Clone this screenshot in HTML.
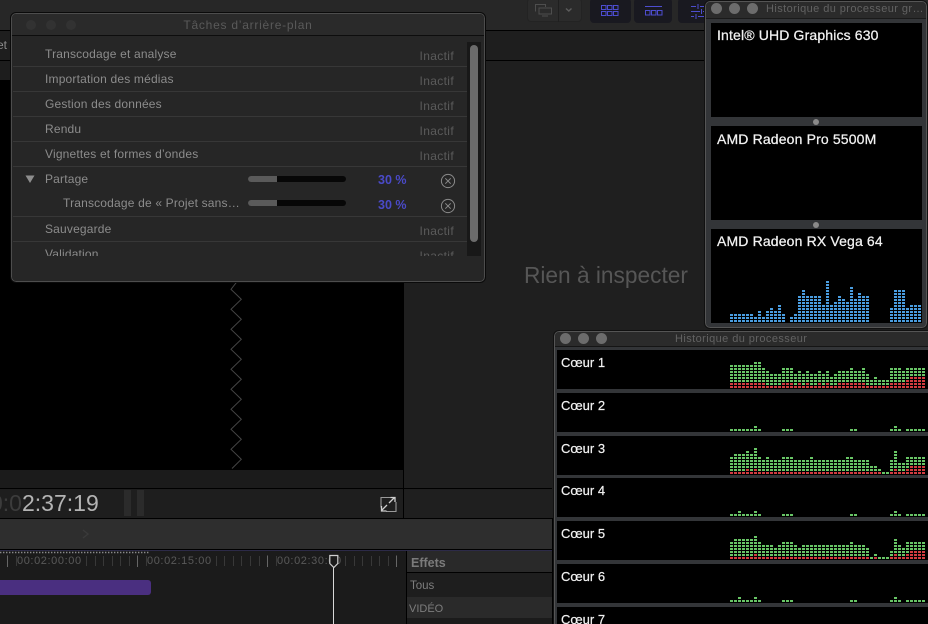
<!DOCTYPE html>
<html lang="fr">
<head>
<meta charset="utf-8">
<title>Tâches d'arrière-plan</title>
<style>
html,body{margin:0;padding:0;background:#1d1d1d}
#p{position:relative;width:928px;height:624px;overflow:hidden;font-family:"Liberation Sans",sans-serif;background:#1e1e1e}
#p div,#p span{position:absolute;white-space:nowrap}
.l{left:0;right:0;height:1px;background:#000}
.t{font-size:12px;line-height:14px;color:#8c8c8c;letter-spacing:.18px;left:33px}
.i{font-size:12px;line-height:14px;color:#5b5b5b;right:24px;letter-spacing:.35px}
.s{left:1px;width:455px;height:1px;background:#373737}
.pc{font-size:12.5px;line-height:14px;font-weight:bold;color:#4a4ac8;left:366px}
.tr{left:236px;width:98px;height:6px;border-radius:3px;background:#070707}
.fi{left:0;top:0;width:29px;height:6px;border-radius:3px 0 0 3px;background:#5a5a5a}
.g{left:6px;width:211px;height:94px;background:#000}
.gt{left:6px;top:5px;font-size:14px;line-height:16px;color:#f2f2f2;letter-spacing:.15px;-webkit-text-stroke:.25px #f2f2f2}
.c{left:3px;right:0;height:39px;background:#000}
.ct{left:4px;top:5px;font-size:13px;line-height:15px;color:#f2f2f2;-webkit-text-stroke:.2px #f2f2f2}
.rt{font-size:11px;line-height:12px;color:#595959;top:555px;letter-spacing:.6px}
</style>
</head>
<body>
<div id="p">
  <!-- top bars -->
  <div style="left:0;top:0;width:928px;height:30px;background:#272727"></div>
  <div class="l" style="top:30px"></div>
  <div style="left:0;top:31px;width:928px;height:29px;background:#1e1e1e"></div>
  <div class="l" style="top:60px"></div>
  <div style="top:37px;font-size:12px;line-height:16px;color:#8c8c8c;left:-3px">et</div>

  <!-- toolbar buttons -->
  <div style="left:527px;top:-2px;width:55px;height:24px;border-radius:4px;background:#2b2b2b;border:1px solid #232323;box-sizing:border-box"></div>
  <div style="left:558px;top:0;width:1px;height:22px;background:#1f1f1f"></div>
  <div style="left:590px;top:-2px;width:41px;height:25px;border-radius:4px;background:#191920"></div>
  <div style="left:634px;top:-2px;width:38px;height:25px;border-radius:4px;background:#191920"></div>
  <div style="left:678px;top:-2px;width:40px;height:25px;border-radius:4px;background:#191920"></div>

  <!-- viewer -->
  <div style="left:0;top:61px;width:403px;height:19px;background:#1d1d1d"></div>
  <div style="left:0;top:80px;width:403px;height:390px;background:#000"></div>
  <div style="left:0;top:470px;width:403px;height:18px;background:#1b1b1b"></div>
  <div class="l" style="top:488px;width:552px;right:auto"></div>
  <div style="left:403px;top:60px;width:1px;height:458px;background:#000"></div>
  <div style="left:404px;top:61px;width:524px;height:427px;background:#1f1f1f"></div>
  <div style="left:404px;top:489px;width:148px;height:29px;background:#1f1f1f"></div>
  <div style="left:0;top:489px;width:403px;height:29px;background:#1e1e1e"></div>
  <div class="l" style="top:518px;width:552px;right:auto"></div>
  <div style="left:524px;top:262px;font-size:22.7px;line-height:26px;color:#565656">Rien à inspecter</div>

  <!-- timecode -->
  <div style="left:-10px;top:489px;font-size:23px;line-height:28px;color:#3c3c3c">0:0</div>
  <div style="left:22px;top:489px;font-size:23px;line-height:28px;color:#b4b4b4">2:37:19</div>
  <div style="left:124px;top:490px;width:7px;height:26px;background:#2b2b2b"></div>
  <div style="left:137px;top:490px;width:7px;height:26px;background:#2b2b2b"></div>

  <!-- mid band -->
  <div style="left:0;top:519px;width:552px;height:30px;background:#2e2e2e"></div>
  <div style="left:0;top:549px;width:552px;height:1px;background:#000"></div>
  <div style="left:0;top:550px;width:552px;height:1px;background:#2c2a48"></div>
  <div style="left:0;top:551px;width:552px;height:73px;background:#1b1b1b"></div>
  <div style="left:552px;top:518px;width:2px;height:106px;background:#000"></div>

  <!-- ruler -->
  <div class="rt" style="left:17px">00:02:00:00</div>
  <div class="rt" style="left:147px">00:02:15:00</div>
  <div class="rt" style="left:277px">00:02:30:00</div>
  <!-- clip -->
  <div style="left:-6px;top:580px;width:157px;height:15px;border-radius:3px;background:#4a2f80"></div>

  <!-- effects -->
  <div style="left:406px;top:551px;width:1px;height:73px;background:#000"></div>
  <div style="left:407px;top:551px;width:145px;height:21px;background:#292929"></div>
  <div style="left:407px;top:572px;width:145px;height:1px;background:#000"></div>
  <div style="left:407px;top:573px;width:145px;height:24px;background:#1e1e1e"></div>
  <div style="left:407px;top:597px;width:145px;height:21px;background:#2a2a2a"></div>
  <div style="left:407px;top:618px;width:145px;height:6px;background:#1b1b1b"></div>
  <div style="left:411px;top:556px;font-size:12.5px;line-height:15px;font-weight:bold;color:#7b7b7b">Effets</div>
  <div style="left:410px;top:579px;font-size:11.5px;line-height:14px;color:#7d7d7d">Tous</div>
  <div style="left:409px;top:602px;font-size:11px;line-height:14px;color:#7d7d7d">VIDÉO</div>

  <!-- base svg -->
  <svg style="position:absolute;left:0;top:0" width="928" height="624" viewBox="0 0 928 624" fill="none">
    <path d="M237.5 281L231 289.3 241.3 299.3 231 309.3 241.3 319.3 231 329.3 241.3 339.3 231 349.3 241.3 359.3 231 369.3 241.3 379.3 231 389.3 241.3 399.3 231 409.3 241.3 419.3 231 429.3 241.3 439.3 231 449.3 241.3 459.3 232 468.5" stroke="#464646" stroke-width="1"/>
    <!-- monitor icon -->
    <g stroke="#4e4e4e" stroke-width="1"><path d="M535.5 11.5V4.5H545.5V7M539 8H551.5V14H539ZM542 16H548"/><path d="M566 8.5L568.8 11 571.5 8.5" stroke="#5c5c5c" stroke-width="1.4"/></g>
    <!-- grid icons -->
    <g stroke="#4d4dcf" stroke-width="1">
      <path d="M601.5 5.5h4.5v4h-4.5zM607.5 5.5h4.5v4h-4.5zM613.5 5.5h4.5v4h-4.5zM601.5 11.5h4.5v4h-4.5zM607.5 11.5h4.5v4h-4.5zM613.5 11.5h4.5v4h-4.5z"/>
      <path d="M645 6.5h17M645.5 10.5h4.5v4.5h-4.5zM651.5 10.5h4.5v4.5h-4.5zM657.5 10.5h4.5v4.5h-4.5z"/>
      <path d="M691 6.5h5M700 6.5h5M691 11.5h9M703 11.5h2M691 16.5h3M698 16.5h7M698 4v5M701.5 9v5M696 14v5"/>
    </g>
    <!-- fullscreen -->
    <g stroke="#cfcfcf" stroke-width="1.1">
      <path d="M381 507.5V497.5H391M396 502V511.5H386" stroke="#9a9a9a"/>
      <path d="M389 503L394.5 497.5M390.5 497.5H395V502M387 505L381.5 510.5M381.5 506V511H386.5" stroke-width="1.3"/>
    </g>
    <!-- chevron in mid band -->
    <path d="M83 530L88 534 83 538" stroke="#3a3a3a" stroke-width="1.4"/>
    <!-- ruler -->
    <path d="M0 552.5H150" stroke="#8a8a8a" stroke-width="1.6" stroke-dasharray="1.4 1.6"/>
    <path d="M7.5 555.5V567M137.5 555.5V567M267.5 555.5V567M396.5 555.5V567" stroke="#666"/>
    <path d="M16.5 556V566M86.5 556V566M95.5 556V566M103.5 556V566M112.5 556V566M120.5 556V566M129.5 556V566M146.5 556V566M216.5 556V566M224.5 556V566M233.5 556V566M241.5 556V566M250.5 556V566M259.5 556V566M276.5 556V566M345.5 556V566M354.5 556V566M362.5 556V566M371.5 556V566M379.5 556V566M388.5 556V566" stroke="#383838"/>
    <path d="M333.5 567V624" stroke="#d8d8d8" stroke-width="1"/>
    <path d="M329.8 555.5H337.8V563.5L333.8 567.5 329.8 563.5Z" stroke="#cfcfcf" stroke-width="1.2" fill="#1b1b1b"/>
  </svg>

  <!-- background tasks window -->
  <div style="left:11px;top:13px;width:474px;height:269px;box-sizing:border-box;border:1px solid #4d4d4d;outline:1px solid #0a0a0a;border-radius:5px;background:#262626;overflow:hidden">
    <div style="left:0;top:0;right:0;height:21px;background:#2a2a2a;border-bottom:1px solid #0d0d0d"></div>
    <div style="left:14px;top:6px;width:10px;height:10px;border-radius:50%;background:#323232"></div>
    <div style="left:34px;top:6px;width:10px;height:10px;border-radius:50%;background:#323232"></div>
    <div style="left:54px;top:6px;width:10px;height:10px;border-radius:50%;background:#323232"></div>
    <div style="left:0;right:0;top:4px;text-align:center;font-size:12px;line-height:14px;color:#5a5a5a;letter-spacing:.75px">Tâches d’arrière-plan</div>

    <div style="left:0;top:28px;width:466px;height:214px;overflow:hidden">
      <div class="t" style="top:5px">Transcodage et analyse</div><div class="i" style="top:7px">Inactif</div>
      <div class="s" style="top:24px"></div>
      <div class="t" style="top:30px">Importation des médias</div><div class="i" style="top:32px">Inactif</div>
      <div class="s" style="top:49px"></div>
      <div class="t" style="top:55px">Gestion des données</div><div class="i" style="top:57px">Inactif</div>
      <div class="s" style="top:74px"></div>
      <div class="t" style="top:80px">Rendu</div><div class="i" style="top:82px">Inactif</div>
      <div class="s" style="top:99px"></div>
      <div class="t" style="top:105px">Vignettes et formes d’ondes</div><div class="i" style="top:107px">Inactif</div>
      <div class="s" style="top:124px"></div>
      <svg style="position:absolute;left:13px;top:133px" width="11" height="9"><path d="M0.5 0.5H9.5L5 8Z" fill="#8d8d8d"/></svg>
      <div class="t" style="top:130px">Partage</div>
      <div class="tr" style="top:134px"><div class="fi"></div></div>
      <div class="pc" style="top:131px">30 %</div>
      <svg style="position:absolute;left:428px;top:131px" width="16" height="16" fill="none" stroke="#8a8a8a"><circle cx="8" cy="8" r="6.6"/><path d="M5.3 5.3L10.7 10.7M10.7 5.3L5.3 10.7"/></svg>
      <div class="t" style="top:154px;left:51px">Transcodage de « Projet sans…</div>
      <div class="tr" style="top:158px"><div class="fi"></div></div>
      <div class="pc" style="top:156px">30 %</div>
      <svg style="position:absolute;left:428px;top:156px" width="16" height="16" fill="none" stroke="#8a8a8a"><circle cx="8" cy="8" r="6.6"/><path d="M5.3 5.3L10.7 10.7M10.7 5.3L5.3 10.7"/></svg>
      <div class="s" style="top:174px"></div>
      <div class="t" style="top:180px">Sauvegarde</div><div class="i" style="top:182px">Inactif</div>
      <div class="s" style="top:199px"></div>
      <div class="t" style="top:205px">Validation</div><div class="i" style="top:207px">Inactif</div>
    </div>
    <div style="left:455px;top:28px;width:14px;height:214px;background:#181818"></div>
    <div style="left:458px;top:31px;width:8px;height:197px;border-radius:4px;background:#6b6b6b"></div>
  </div>

  <!-- GPU window -->
  <div style="left:705px;top:1px;width:222px;height:327px;box-sizing:border-box;border:1px solid #555;outline:1px solid #111;border-radius:5px;background:#333538;overflow:hidden">
    <div style="left:0;top:0;right:0;height:16px;background:#2b2b2b;border-bottom:1px solid #1a1a1a"></div>
    <div style="left:5px;top:1px;width:11px;height:11px;border-radius:50%;background:#6c6c6c"></div>
    <div style="left:23px;top:1px;width:11px;height:11px;border-radius:50%;background:#6c6c6c"></div>
    <div style="left:41px;top:1px;width:11px;height:11px;border-radius:50%;background:#6c6c6c"></div>
    <div style="left:60px;top:0;font-size:11px;line-height:14px;color:#626262;letter-spacing:.42px">Historique du processeur gr…</div>
    <div class="g" style="left:5px;top:21px"><div class="gt" style="top:4px">Intel® UHD Graphics 630</div></div>
    <div style="left:107px;top:117px;width:6px;height:6px;border-radius:50%;background:#8a8a8a"></div>
    <div class="g" style="left:5px;top:124px"><div class="gt">AMD Radeon Pro 5500M</div></div>
    <div style="left:107px;top:220px;width:6px;height:6px;border-radius:50%;background:#8a8a8a"></div>
    <div class="g" style="left:5px;top:227px"><div class="gt" style="top:4px">AMD Radeon RX Vega 64</div></div>
  </div>

  <!-- CPU window -->
  <div style="left:554px;top:331px;width:380px;height:300px;box-sizing:border-box;border:1px solid #555;outline:1px solid #111;border-radius:5px;background:#333538;overflow:hidden">
    <div style="left:0;top:0;right:0;height:14px;background:#2b2b2b;border-bottom:1px solid #151515"></div>
    <div style="left:5px;top:1px;width:11px;height:11px;border-radius:50%;background:#6c6c6c"></div>
    <div style="left:23px;top:1px;width:11px;height:11px;border-radius:50%;background:#6c6c6c"></div>
    <div style="left:41px;top:1px;width:11px;height:11px;border-radius:50%;background:#6c6c6c"></div>
    <div style="left:120px;top:0;font-size:11px;line-height:14px;color:#626262;letter-spacing:.42px">Historique du processeur</div>
    <div class="c" style="left:2px;right:-2px;top:18px"><div class="ct">Cœur 1</div></div>
    <div class="c" style="left:2px;right:-2px;top:61px"><div class="ct">Cœur 2</div></div>
    <div class="c" style="left:2px;right:-2px;top:104px"><div class="ct">Cœur 3</div></div>
    <div class="c" style="left:2px;right:-2px;top:146px"><div class="ct">Cœur 4</div></div>
    <div class="c" style="left:2px;right:-2px;top:189px"><div class="ct">Cœur 5</div></div>
    <div class="c" style="left:2px;right:-2px;top:232px"><div class="ct">Cœur 6</div></div>
    <div class="c" style="left:2px;right:-2px;top:275px"><div class="ct">Cœur 7</div></div>
  </div>

  <!-- graphs -->
  <svg style="position:absolute;left:0;top:0" width="928" height="624" viewBox="0 0 928 624" shape-rendering="crispEdges">
    <defs>
      <pattern id="b" patternUnits="userSpaceOnUse" width="4" height="3"><rect width="3" height="2" y="1" fill="#4a9de0"/></pattern>
      <pattern id="g" patternUnits="userSpaceOnUse" width="4" height="3"><rect width="3" height="2" y="1" fill="#68c566"/></pattern>
      <pattern id="r" patternUnits="userSpaceOnUse" width="4" height="3"><rect width="3" height="3" fill="#000"/><rect width="3" height="2" y="1" fill="#d33c40"/></pattern>
    </defs>
    <g transform="translate(730,322)"><path fill="url(#b)" d="M0 0V-9h24V-6h4V-12h4V-6h4V-12h4V-15h4V-12h4V-18h4V-9h4V0h4V-6h4V-9h4V-27h4V-33h4V-27h16V-18h4V-42h4V-18h4V-21h4V-27h4V-24h4V-21h4V-36h4V-24h4V-30h4V-27h8V0h20V-15h4V-33h12V-15h4V-18h12V0Z"/></g>
    <g transform="translate(730,388)">
      <path fill="url(#g)" d="M0 0V-24h24V-27h8V-21h4V-18h4V-15h12V-21h12V-15h4V-18h4V-15h4V-18h4V-15h8V-18h4V-15h4V-18h4V-12h4V-15h4V-18h12V-21h4V-18h8V-21h4V-15h4V-9h4V-12h4V-9h12V-21h12V-18h4V-21h20V0Z"/>
      <path fill="url(#r)" d="M0 0V-6h36V-3h16V-6h12V-3h4V-6h4V-3h4V-6h4V-3h8V-6h4V-3h4V-6h4V-3h8V-6h28V-3h24V-6h16V-9h4V-12h16V0Z"/>
    </g>
    <g transform="translate(730,431)"><path fill="url(#g)" d="M0 0V-3h24V-6h4V-3h4V0h20V-3h12V0h56V-3h8V0h32V-3h4V-6h4V-3h4V0h4V-3h20V0Z"/></g>
    <g transform="translate(730,474)">
      <path fill="url(#g)" d="M0 0V-18h4V-21h12V-24h4V-21h4V-27h4V-18h4V-15h4V-18h4V-15h12V-18h12V-15h16V-18h4V-15h32V-18h8V-15h16V-9h8V-6h4V-3h8V-15h4V-24h4V-12h8V-18h20V0Z"/>
      <path fill="url(#r)" d="M0 0V-3h16V-6h4V-3h4V-6h4V-3h124V0h8V-3h4V-6h4V-3h8V-6h4V-9h16V0Z"/>
    </g>
    <g transform="translate(730,516)"><path fill="url(#g)" d="M0 0V-3h8V-6h4V-3h12V-6h4V-3h4V0h20V-3h12V0h56V-3h8V0h32V-3h4V-6h4V-3h4V0h4V-3h20V0Z"/></g>
    <g transform="translate(730,559)">
      <path fill="url(#g)" d="M0 0V-18h4V-21h20V-24h4V-18h4V-15h12V-12h4V-15h4V-18h12V-15h4V-12h4V-15h48V-18h4V-15h12V-12h4V-3h4V-6h4V-3h12V-9h4V-21h4V-15h4V-12h4V-18h20V0Z"/>
      <path fill="url(#r)" d="M0 0V-3h24V-6h4V-3h112V0h4V-3h4V0h12V-3h4V-6h4V-3h8V-6h4V-9h16V0Z"/>
    </g>
    <g transform="translate(730,602)"><path fill="url(#g)" d="M0 0V-3h8V-6h4V-3h12V-6h4V-3h4V0h20V-3h12V0h56V-3h8V0h32V-3h4V-6h4V-3h4V0h4V-3h20V0Z"/></g>
  </svg>
</div>
</body>
</html>
